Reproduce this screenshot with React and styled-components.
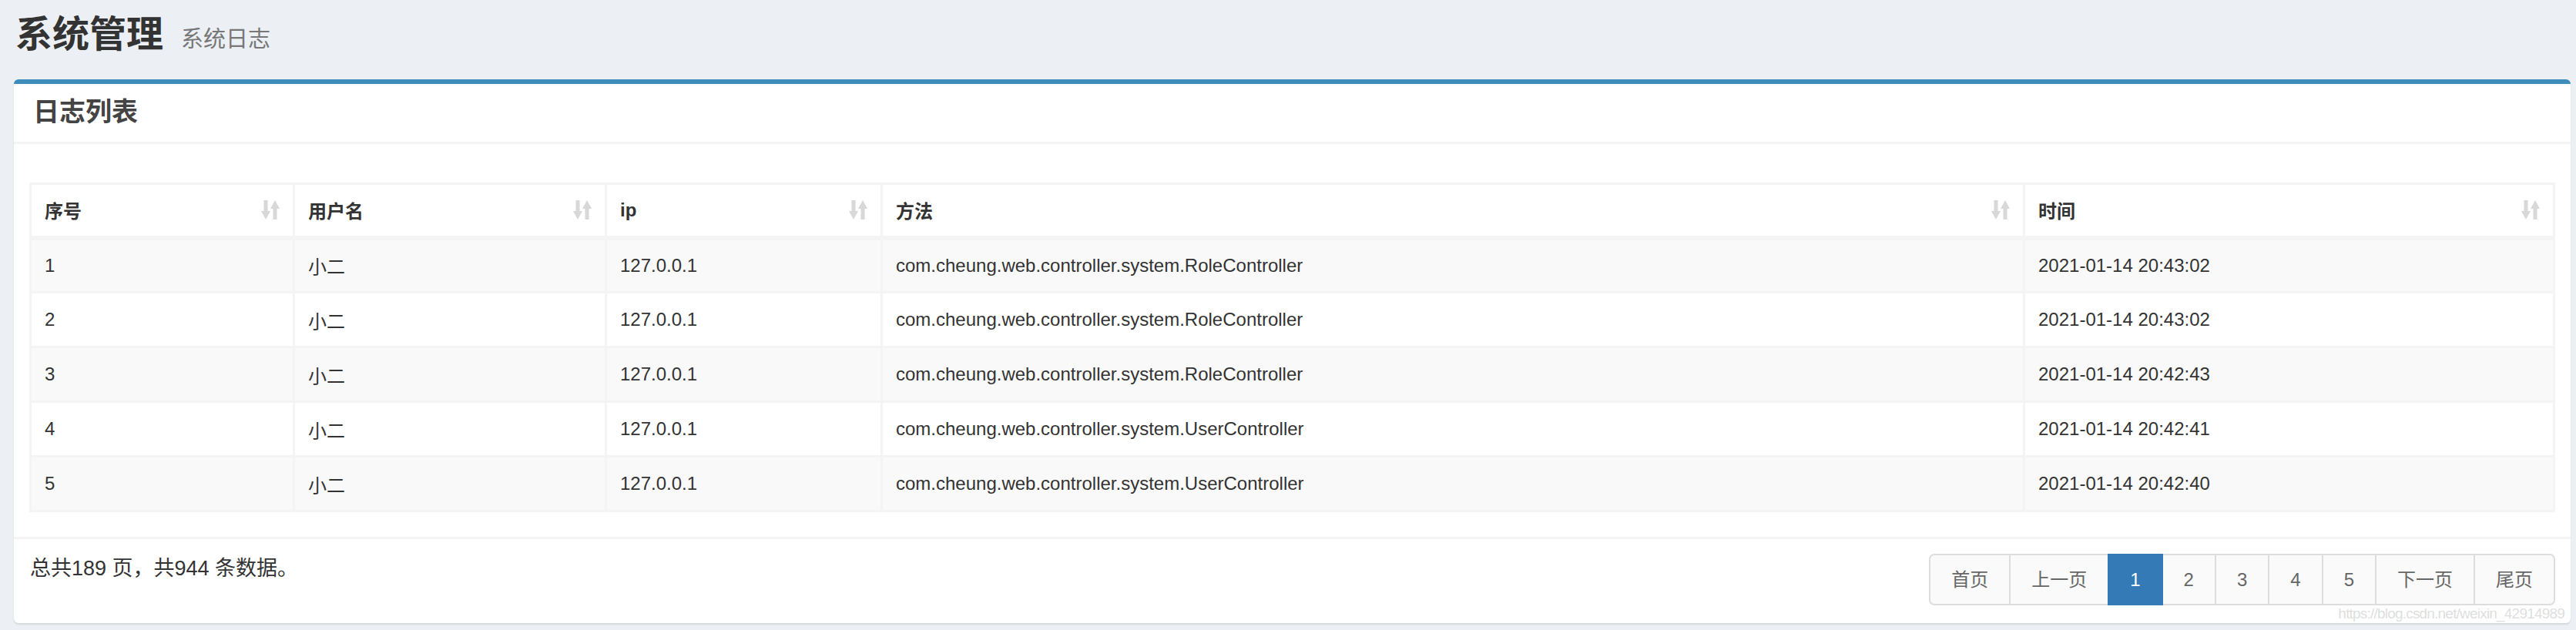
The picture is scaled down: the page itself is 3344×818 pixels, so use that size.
import React from "react"
import styled, { createGlobalStyle } from "styled-components"

const GlobalStyle = createGlobalStyle`
    html, body {
        margin: 0;
        padding: 0;
        background-color: #ecf0f5;
        font-family: "Liberation Sans", "Noto Sans CJK SC", sans-serif;
        color: #333;
    }
    * {
        box-sizing: border-box;
    }
`

const Page = styled.div`
    padding: 0 7px 11px 18px;
`

const ContentHeader = styled.div`
    display: flex;
    align-items: baseline;
    padding: 15px 0 28px 2px;
`

const Title = styled.h1`
    margin: 0;
    font-size: 48px;
    line-height: 60px;
    font-weight: 700;
    color: #333;
`

const SubTitle = styled.small`
    margin-left: 23px;
    font-size: 29px;
    font-weight: 400;
    color: #777;
`

const Box = styled.div`
    position: relative;
    background-color: #ffffff;
    border-top: 6px solid #3c8dbc;
    border-radius: 6px;
    box-shadow: 0 2px 2px rgba(0, 0, 0, 0.1);
`

const BoxHeader = styled.div`
    padding: 19px 25px 22px;
    border-bottom: 3px solid #f4f4f4;

    & h3 {
        margin: 0;
        font-size: 34px;
        line-height: 34px;
        font-weight: 700;
        color: #444;
    }
`

const BoxBody = styled.div`
    padding: 50px 20px 32px;
`

const Table = styled.table`
    width: 100%;
    table-layout: fixed;
    border-collapse: collapse;
    font-size: 24px;
    border: 3px solid #f4f4f4;
`

const Col = styled.col`
    width: ${(p) => (p.$w ? p.$w + "px" : "auto")};
`

const Row = styled.tr`
    height: ${(p) => (p.$head ? 70 : 71)}px;
    background-color: ${(p) => (p.$odd ? "#f9f9f9" : "#ffffff")};
`

const Th = styled.th`
    padding: 0 17px;
    border: 3px solid #f4f4f4;
    border-bottom-width: 6px;
    text-align: left;
    font-weight: 700;
    color: #333;
    vertical-align: middle;
`

const HeadInner = styled.div`
    display: flex;
    align-items: center;
    justify-content: space-between;
`

const Td = styled.td`
    padding: 0 17px;
    border: 3px solid #f4f4f4;
    color: #333;
    vertical-align: middle;
    white-space: nowrap;
`

const BoxFooter = styled.div`
    display: flex;
    justify-content: space-between;
    align-items: flex-start;
    padding: 19px 20px 23px 21px;
    border-top: 3px solid #f4f4f4;
`

const Summary = styled.div`
    font-size: 27px;
    line-height: 38px;
    color: #333;
`

const Pagination = styled.div`
    display: flex;
`

const PageItem = styled.a`
    display: block;
    height: 67px;
    padding: 0 27px;
    margin-left: -2px;
    font-size: 24px;
    line-height: 63px;
    color: ${(p) => (p.$active ? "#ffffff" : "#666")};
    background-color: ${(p) => (p.$active ? "#337ab7" : "#fafafa")};
    border: 2px solid ${(p) => (p.$active ? "#337ab7" : "#dddddd")};
    position: relative;
    z-index: ${(p) => (p.$active ? 2 : 1)};
    cursor: pointer;

    &:first-child {
        margin-left: 0;
        border-radius: 7px 0 0 7px;
    }
    &:last-child {
        border-radius: 0 7px 7px 0;
    }
`

const Watermark = styled.span`
    position: absolute;
    right: 8px;
    bottom: 1px;
    font-size: 19px;
    letter-spacing: -0.8px;
    color: rgba(180, 180, 180, 0.45);
    pointer-events: none;
`

const SortIcon = () => (
    <svg width="24" height="25" viewBox="0 0 24 25">
        <g fill="#d8d8d8">
            <rect x="3.5" y="0" width="5" height="17" />
            <polygon points="0,14 12,14 6,25" />
            <polygon points="12,11 24,11 18,0" />
            <rect x="15.5" y="8" width="5" height="17" />
        </g>
    </svg>
)

const columns = [
    { title: "序号", width: 342 },
    { title: "用户名", width: 405 },
    { title: "ip", width: 358 },
    { title: "方法", width: 1483 },
    { title: "时间" },
]

const logs = [
    { id: 1, user: "小二", ip: "127.0.0.1", method: "com.cheung.web.controller.system.RoleController", time: "2021-01-14 20:43:02" },
    { id: 2, user: "小二", ip: "127.0.0.1", method: "com.cheung.web.controller.system.RoleController", time: "2021-01-14 20:43:02" },
    { id: 3, user: "小二", ip: "127.0.0.1", method: "com.cheung.web.controller.system.RoleController", time: "2021-01-14 20:42:43" },
    { id: 4, user: "小二", ip: "127.0.0.1", method: "com.cheung.web.controller.system.UserController", time: "2021-01-14 20:42:41" },
    { id: 5, user: "小二", ip: "127.0.0.1", method: "com.cheung.web.controller.system.UserController", time: "2021-01-14 20:42:40" },
]

const pages = ["首页", "上一页", "1", "2", "3", "4", "5", "下一页", "尾页"]

export default function App() {
    return (
        <Page>
            <GlobalStyle />
            <ContentHeader>
                <Title>系统管理</Title>
                <SubTitle>系统日志</SubTitle>
            </ContentHeader>

            <Box>
                <BoxHeader>
                    <h3>日志列表</h3>
                </BoxHeader>

                <BoxBody>
                    <Table>
                        <colgroup>
                            {columns.map((c) => (
                                <Col key={c.title} $w={c.width} />
                            ))}
                        </colgroup>
                        <thead>
                            <Row $head>
                                {columns.map((c) => (
                                    <Th key={c.title}>
                                        <HeadInner>
                                            <span>{c.title}</span>
                                            <SortIcon />
                                        </HeadInner>
                                    </Th>
                                ))}
                            </Row>
                        </thead>
                        <tbody>
                            {logs.map((log, i) => (
                                <Row key={log.id} $odd={i % 2 === 0}>
                                    <Td>{log.id}</Td>
                                    <Td>{log.user}</Td>
                                    <Td>{log.ip}</Td>
                                    <Td>{log.method}</Td>
                                    <Td>{log.time}</Td>
                                </Row>
                            ))}
                        </tbody>
                    </Table>
                </BoxBody>

                <BoxFooter>
                    <Summary>总共189 页，共944 条数据。</Summary>
                    <Pagination>
                        {pages.map((p) => (
                            <PageItem key={p} $active={p === "1"}>
                                {p}
                            </PageItem>
                        ))}
                    </Pagination>
                </BoxFooter>

                <Watermark>https://blog.csdn.net/weixin_42914989</Watermark>
            </Box>
        </Page>
    )
}
